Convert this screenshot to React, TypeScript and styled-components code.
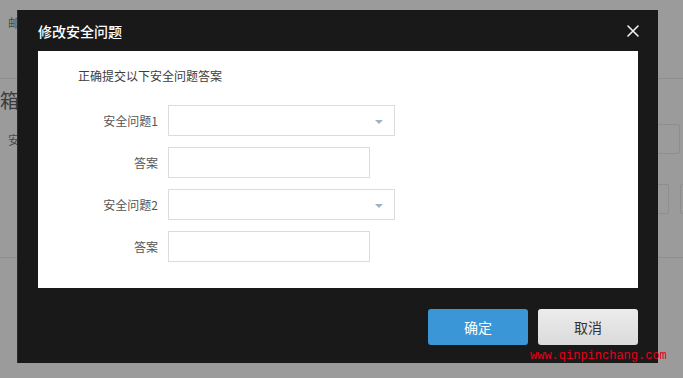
import React, { ReactElement } from "react";
import styled, { createGlobalStyle } from "styled-components";

const GlobalStyle = createGlobalStyle`
  html, body {
    margin: 0;
    padding: 0;
    background: #9b9b9b;
    font-family: "Noto Sans CJK SC", "Noto Sans", sans-serif;
    overflow: hidden;
  }
`;

interface IFieldProps {
  width: number;
}

interface IButtonProps {
  primary?: boolean;
}

interface IGhostProps {
  width: number;
  marginRight?: number;
}

const Page = styled.div`
  position: relative;
  width: 683px;
  height: 378px;
  overflow: hidden;
`;

/* dimmed page behind the dialog */
const Header = styled.div`
  height: 79px;
  border-bottom: 1px solid #8d8d8d;
  padding: 14px 0 0 8px;
  box-sizing: border-box;
  font-size: 12px;
  color: #4a4a4a;
`;

const Section = styled.div`
  height: 169px;
  border-bottom: 1px solid #8d8d8d;
`;

const SectionTitle = styled.div`
  margin: 9px 0 0 0;
  font-size: 19px;
  line-height: 24px;
  color: #3a3a3a;
`;

const GhostRow = styled.div`
  display: flex;
  align-items: center;
  justify-content: space-between;
  margin-top: 12px;
  height: 30px;
  padding-left: 8px;
  font-size: 12px;
  color: #4a4a4a;
`;

const GhostActions = styled.div`
  display: flex;
  justify-content: flex-end;
  margin-top: 30px;
  gap: 11px;
`;

const GhostBox = styled.div<IGhostProps>`
  width: ${(p) => p.width}px;
  height: 30px;
  box-sizing: border-box;
  border: 1px solid #8e8e8e;
  border-radius: 2px;
  margin-right: ${(p) => p.marginRight ?? 0}px;
`;

/* dialog */
const Dialog = styled.div`
  position: absolute;
  left: 17px;
  top: 10px;
  width: 641px;
  height: 353px;
  background: #191919;
  border-left: 1px solid #2b2b2b;
  box-sizing: border-box;
  display: flex;
  flex-direction: column;
  padding: 0 20px 0 20px;
`;

const TitleBar = styled.div`
  height: 41px;
  display: flex;
  align-items: center;
  justify-content: space-between;
`;

const Title = styled.h3`
  margin: 0;
  font-size: 14px;
  font-weight: 500;
  color: #ffffff;
`;

const Close = styled.button`
  border: none;
  background: none;
  padding: 0;
  margin-right: -1px;
  width: 12px;
  height: 12px;
  display: flex;
  cursor: pointer;
`;

const Body = styled.div`
  background: #ffffff;
  height: 237px;
  padding: 16px 0 0 40px;
  box-sizing: border-box;
`;

const Intro = styled.p`
  margin: 0 0 20px;
  font-size: 12px;
  line-height: 18px;
  color: #3c3c3c;
`;

const Form = styled.div`
  display: flex;
  flex-direction: column;
  gap: 11px;
`;

const Row = styled.div`
  display: flex;
  align-items: center;
  gap: 10px;
`;

const Label = styled.label`
  width: 80px;
  text-align: right;
  font-size: 12px;
  color: #555555;
`;

const Field = styled.div<IFieldProps>`
  position: relative;
  width: ${(p) => p.width}px;
  height: 31px;
  box-sizing: border-box;
  border: 1px solid #dcdcdc;
  background: #fff;
`;

const Arrow = styled.span`
  position: absolute;
  right: 11px;
  top: 14px;
  width: 0;
  height: 0;
  border-left: 4px solid transparent;
  border-right: 4px solid transparent;
  border-top: 4px solid #9db3c4;
`;

const Footer = styled.div`
  display: flex;
  justify-content: flex-end;
  gap: 10px;
  padding-top: 21px;
`;

const Button = styled.button<IButtonProps>`
  width: 100px;
  height: 36px;
  border: none;
  border-radius: 3px;
  font-family: "Noto Sans CJK SC", sans-serif;
  font-size: 14px;
  cursor: pointer;
  color: ${(p) => (p.primary ? "#ffffff" : "#333333")};
  background: ${(p) =>
    p.primary ? "#3b96d7" : "linear-gradient(#ececec, #dadada)"};
`;

const Watermark = styled.span`
  position: absolute;
  left: 530px;
  top: 349px;
  font-family: "Liberation Mono", monospace;
  font-size: 12px;
  line-height: 14px;
  color: #e5001a;
`;

const questions = [
  { label: "安全问题1", select: true },
  { label: "答案", select: false },
  { label: "安全问题2", select: true },
  { label: "答案", select: false },
];

const App = (): ReactElement => {
  return (
    <Page>
      <GlobalStyle />
      <Header>邮箱</Header>
      <Section>
        <SectionTitle>箱安全</SectionTitle>
        <GhostRow>
          <span>安全问题</span>
          <GhostBox width={120} marginRight={3} />
        </GhostRow>
        <GhostActions>
          <GhostBox width={80} />
          <GhostBox width={40} marginRight={-37} />
        </GhostActions>
      </Section>

      <Dialog>
        <TitleBar>
          <Title>修改安全问题</Title>
          <Close aria-label="关闭">
            <svg width="12" height="12" viewBox="0 0 12 12">
              <path
                d="M1 1 L11 11 M11 1 L1 11"
                stroke="#f2f2f2"
                strokeWidth="1.6"
                strokeLinecap="round"
              />
            </svg>
          </Close>
        </TitleBar>
        <Body>
          <Intro>正确提交以下安全问题答案</Intro>
          <Form>
            {questions.map((q, index) => (
              <Row key={index}>
                <Label>{q.label}</Label>
                <Field width={q.select ? 227 : 202}>
                  {q.select && <Arrow />}
                </Field>
              </Row>
            ))}
          </Form>
        </Body>
        <Footer>
          <Button primary>确定</Button>
          <Button>取消</Button>
        </Footer>
      </Dialog>
      <Watermark>www.qinpinchang.com</Watermark>
    </Page>
  );
};

export default App;
